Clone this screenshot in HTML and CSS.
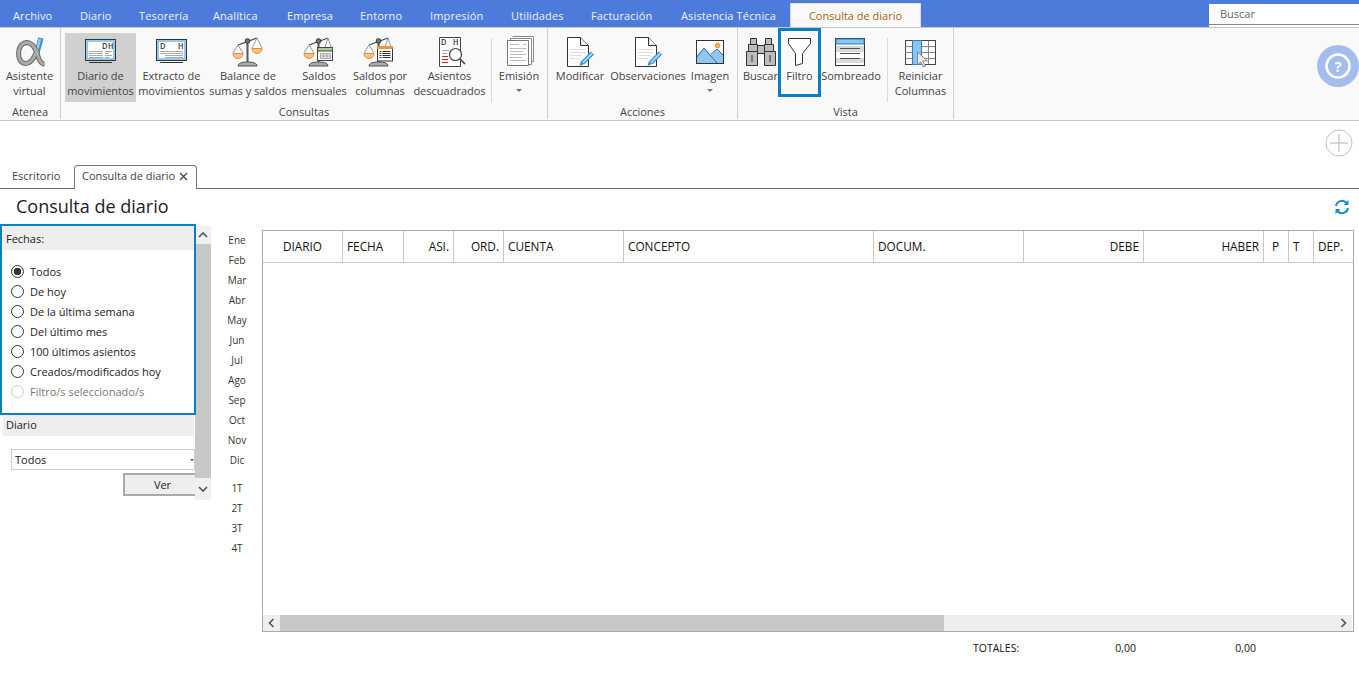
FILE: index.html
```html
<!DOCTYPE html>
<html lang="es">
<head>
<meta charset="utf-8">
<title>Consulta de diario</title>
<link rel="stylesheet" href="styles.css">
</head>
<body>
<div class="app">
  <header class="menubar">
    <span class="menu-item">Archivo</span><span class="menu-item">Diario</span><span class="menu-item">Tesorería</span><span class="menu-item">Analítica</span><span class="menu-item">Empresa</span><span class="menu-item">Entorno</span><span class="menu-item">Impresión</span><span class="menu-item">Utilidades</span><span class="menu-item">Facturación</span><span class="menu-item">Asistencia Técnica</span><span class="menu-tab">Consulta de diario</span>
    <div class="search"><span>Buscar</span></div>
  </header>

  <section class="ribbon">
    <div class="group g-atenea">
      <div class="buttons">
        <div class="rb w-asis">
          <svg class="ico" viewBox="0 0 40 36"><path d="M31 5 27 19" stroke="#3d97d6" stroke-width="5.500" fill="none"/><path d="M30 6 27 17" stroke="#9ccbef" stroke-width="2.500" fill="none"/><path d="M25.500 17C23 10 17 8 12.500 11 7.500 15 7.500 25 11.500 29c4 3 9 1 12-4 2-3 3-6 3-9 1 7 3 15 8 15" fill="none" stroke="#666" stroke-width="5"/><path d="M25.500 17C23 10 17 8 12.500 11 7.500 15 7.500 25 11.500 29c4 3 9 1 12-4 2-3 3-6 3-9 1 7 3 15 8 15" fill="none" stroke="#ababab" stroke-width="3"/></svg>
          <span class="lbl">Asistente<br>virtual</span>
        </div>
      </div>
      <div class="gname">Atenea</div>
    </div>

    <div class="group g-consultas">
      <div class="buttons">
        <div class="rb w-diario active">
          <svg class="ico" viewBox="0 0 40 36"><rect x="4.500" y="6.500" width="30" height="21" fill="#fff" stroke="#333"/><rect x="6" y="8" width="27" height="18" fill="#fff" stroke="#2f93d8"/><text x="21" y="15.500" class="ict">D</text><text x="27" y="15.500" class="ict">H</text><path d="M8 18.500h14M8 20.500h14M8 22.500h14M8 24.500h14M24 18.500h7M24 20.500h4M24 22.500h7M24 24.500h4" stroke="#aaa" fill="none"/><path d="M8 29.500h23" stroke="#333" fill="none"/></svg>
          <span class="lbl">Diario de<br>movimientos</span>
        </div>
        <div class="rb w-extracto">
          <svg class="ico" viewBox="0 0 40 36"><rect x="4.500" y="6.500" width="30" height="21" fill="#fff" stroke="#333"/><rect x="6" y="8" width="27" height="18" fill="#fff" stroke="#2f93d8"/><text x="8" y="15.500" class="ict">D</text><text x="26" y="15.500" class="ict">H</text><path d="M8 18.500h23M8 20.500h23M13 22.500h18M13 24.500h18" stroke="#aaa" fill="none"/><path d="M8 29.500h23" stroke="#333" fill="none"/></svg>
          <span class="lbl">Extracto de<br>movimientos</span>
        </div>
        <div class="rb w-balance">
          <svg class="ico" viewBox="0 0 40 36"><use href="#scale"/><path d="M29 5l-5 10M29 5l5 10" stroke="#999" fill="none"/><path d="M24 15.500h10a5 5 0 0 1-10 0z" fill="#f9c287" stroke="#e88d2c"/></svg>
          <span class="lbl">Balance de<br>sumas y saldos</span>
        </div>
        <div class="rb w-mens">
          <svg class="ico" viewBox="0 0 40 36"><use href="#scale"/><path d="M29 5l-3 9M29 5l3 9" stroke="#999" fill="none"/><rect x="18.500" y="14.500" width="15" height="13" fill="#fff" stroke="#444"/><rect x="18.500" y="14.500" width="15" height="3.500" fill="#a8d08d" stroke="#444"/><path d="M21.500 20.500h10v5h-10zM24.500 20.500v5M28 20.500v5M21.500 23h10" fill="#e6e6e6" stroke="#aaa"/></svg>
          <span class="lbl">Saldos<br>mensuales</span>
        </div>
        <div class="rb w-cols">
          <svg class="ico" viewBox="0 0 40 36"><g transform="translate(-1 0)"><use href="#scale"/><path d="M29 5l-3 9M29 5l3 9" stroke="#999" fill="none"/></g><rect x="17.500" y="13.500" width="15" height="14.500" fill="#fff" stroke="#333"/><rect x="17" y="13" width="16" height="3" fill="#f0953c"/><path d="M19.500 18.500h2M19.500 20.500h2M19.500 22.500h2M19.500 24.500h2M22.500 18.500h8M22.500 20.500h8M22.500 22.500h8M22.500 24.500h8" stroke="#333" fill="none"/></svg>
          <span class="lbl">Saldos por<br>columnas</span>
        </div>
        <div class="rb w-asien">
          <svg class="ico" viewBox="0 0 40 36"><path d="M9.500 4.500h21v29h-21z" fill="#fff" stroke="#444"/><text x="11" y="12" class="ict">D</text><text x="23" y="12" class="ict">H</text><path d="M12 17.500h7M12 20.500h5" stroke="#aaa" fill="none"/><path d="M12 23.500h6M12 26.500h6M12 29.500h6" stroke="#d3202f" fill="none"/><path d="M19.500 21.500a6 6 0 1 0 12 0a6 6 0 1 0-12 0z" fill="#fff" stroke="#444" stroke-width="1.200"/><path d="M30 26l5 5" stroke="#444" stroke-width="1.600"/></svg>
          <span class="lbl">Asientos<br>descuadrados</span>
        </div>
        <i class="sep"></i>
        <div class="rb w-emis">
          <svg class="ico" viewBox="0 0 40 36"><path d="M13.500 3.500h21v25h-2v2h-2" fill="#fff" stroke="#888"/><path d="M11.500 5.500h21v26h-21z" fill="#fff" stroke="#888"/><path d="M8.500 7.500h21v25h-21z" fill="#fff" stroke="#777"/><path d="M11 11.500h9M24 11.500h3M11 15.500h16M11 18.500h13M11 21.500h16M11 24.500h12M11 27.500h16" stroke="#bbb" fill="none"/></svg>
          <span class="lbl">Emisión</span><b class="caret"></b>
        </div>
      </div>
      <div class="gname">Consultas</div>
    </div>

    <div class="group g-acciones">
      <div class="buttons">
        <div class="rb w-modif">
          <svg class="ico" viewBox="0 0 40 36"><use href="#doc"/></svg>
          <span class="lbl">Modificar</span>
        </div>
        <div class="rb w-obs">
          <svg class="ico" viewBox="0 0 40 36"><use href="#doc"/></svg>
          <span class="lbl">Observaciones</span>
        </div>
        <div class="rb w-img">
          <svg class="ico" viewBox="0 0 40 36"><rect x="6.500" y="7.500" width="27" height="23" fill="#fff" stroke="#333"/><path d="M7 30V22l7-7 7 7 6-6 6 6v8z" fill="#8fc7ef"/><path d="M7 24l7-9 13 15M21 21l6-5 6 6" fill="none" stroke="#2a6ea8"/><circle cx="27.500" cy="12.500" r="2.300" fill="#f6b26b" stroke="#e08a2a"/></svg>
          <span class="lbl">Imagen</span><b class="caret"></b>
        </div>
      </div>
      <div class="gname">Acciones</div>
    </div>

    <div class="group g-vista">
      <div class="buttons">
        <div class="rb w-busc">
          <svg class="ico" viewBox="0 0 40 36"><path d="M9.500 5.500h6v6h-6zM24.500 5.500h6v6h-6zM7.500 11.500h9v7h-9zM23.500 11.500h9v7h-9zM5.500 18.500h11v14h-11zM23.500 18.500h11v14h-11zM16.500 12.500h7v8h-7z" fill="#bdbdbd" stroke="#333"/><path d="M11 22v7M29 22v7" stroke="#333" fill="none"/></svg>
          <span class="lbl">Buscar</span>
        </div>
        <div class="rb w-filt focus">
          <svg class="ico" viewBox="0 0 40 36"><path d="M8.500 5.500h22v5l-8 10v10l-7 2V20.500l-7-10z" fill="#fff" stroke="#333"/></svg>
          <span class="lbl">Filtro</span>
        </div>
        <div class="rb w-somb">
          <svg class="ico" viewBox="0 0 40 36"><rect x="4.500" y="5.500" width="29" height="27" fill="#fff" stroke="#333"/><rect x="5" y="6" width="28" height="5" fill="#8cc4ee" stroke="#2a7fc4"/><rect x="5" y="13" width="28" height="6" fill="#d9d9d9"/><rect x="5" y="25" width="28" height="5" fill="#d9d9d9"/><path d="M9 15.500h20M9 20.500h20M9 25.500h20" stroke="#555" fill="none"/></svg>
          <span class="lbl">Sombreado</span>
        </div>
        <i class="sep sep-v"></i>
        <div class="rb w-rein">
          <svg class="ico" viewBox="0 0 40 36"><rect x="4.500" y="7.500" width="30" height="24" fill="#fff" stroke="#444"/><path d="M4 13.500h30M4 19.500h30M4 25.500h30M11.500 8v23M20.500 8v23M27.500 8v23" stroke="#888" fill="none"/><rect x="11.500" y="7.500" width="9" height="24" fill="#8cc4ee" stroke="#2a7fc4"/><path d="M16.500 19l0 13 3-3 3 5 2-1-3-5h5z" fill="#e8e8e8" stroke="#888"/></svg>
          <span class="lbl">Reiniciar<br>Columnas</span>
        </div>
      </div>
      <div class="gname">Vista</div>
    </div>

    <div class="help">
      <svg viewBox="0 0 44 44" width="44" height="44"><circle cx="22" cy="22" r="21" fill="#a5bdec"/><circle cx="22" cy="22" r="11.500" fill="none" stroke="#fff" stroke-width="2.500"/><text x="22" y="27.500" class="qm">?</text></svg>
    </div>
  </section>

  <section class="tabzone">
    <div class="plus-row">
      <svg viewBox="0 0 28 28" width="28" height="28"><circle cx="14" cy="14" r="13" fill="#fff" stroke="#c4c4c4"/><path d="M14 5v18M5 14h18" stroke="#b4b4b4" fill="none"/></svg>
    </div>
    <nav class="tabs">
      <span class="tab">Escritorio</span>
      <span class="tab current">Consulta de diario<svg viewBox="0 0 9 9" width="9" height="9"><path d="M1 1l7 7M8 1L1 8" stroke="#444" stroke-width="1.300" fill="none"/></svg></span>
    </nav>
  </section>

  <div class="titlebar">
    <h1>Consulta de diario</h1>
    <svg viewBox="0 0 16 16" width="16" height="16"><path d="M2 7a6 6 0 0 1 10.500-3M14 9a6 6 0 0 1-10.500 3" fill="none" stroke="#1c86cf" stroke-width="2"/><path d="M14.500 1v5h-5zM1.500 15v-5h5z" fill="#1c86cf"/></svg>
  </div>

  <main class="content">
    <aside class="filters">
      <div class="filter-scroll">
        <div class="fechas">
          <div class="fhead">Fechas:</div>
          <div class="radios">
            <label class="radio on"><i></i>Todos</label>
            <label class="radio"><i></i>De hoy</label>
            <label class="radio"><i></i>De la última semana</label>
            <label class="radio"><i></i>Del último mes</label>
            <label class="radio"><i></i>100 últimos asientos</label>
            <label class="radio"><i></i>Creados/modificados hoy</label>
            <label class="radio off"><i></i>Filtro/s seleccionado/s</label>
          </div>
        </div>
        <div class="fhead dhead">Diario</div>
        <div class="select"><span>Todos</span><b></b></div>
        <div class="ver-row"><span class="ver">Ver</span></div>
      </div>
      <div class="vscroll">
        <svg viewBox="0 0 16 16" width="16" height="18"><path d="M4 10l4-4 4 4" fill="none" stroke="#555" stroke-width="1.600"/></svg>
        <div class="vthumb"></div>
        <svg viewBox="0 0 16 16" width="16" height="22"><path d="M4 6l4 4 4-4" fill="none" stroke="#555" stroke-width="1.600"/></svg>
      </div>
    </aside>

    <div class="months">
      <span>Ene</span><span>Feb</span><span>Mar</span><span>Abr</span><span>May</span><span>Jun</span><span>Jul</span><span>Ago</span><span>Sep</span><span>Oct</span><span>Nov</span><span>Dic</span>
      <span class="q">1T</span><span>2T</span><span>3T</span><span>4T</span>
    </div>

    <div class="tablezone">
      <div class="grid">
        <div class="ghead">
          <span class="ctr">DIARIO</span><span>FECHA</span><span class="rgt">ASI.</span><span class="rgt">ORD.</span><span>CUENTA</span><span>CONCEPTO</span><span>DOCUM.</span><span class="rgt">DEBE</span><span class="rgt">HABER</span><span class="ind">P</span><span>T</span><span>DEP.</span>
        </div>
        <div class="gbody"></div>
        <div class="hscroll">
          <svg viewBox="0 0 16 16" width="17" height="16"><path d="M10 4 6 8l4 4" fill="none" stroke="#555" stroke-width="1.600"/></svg>
          <div class="hthumb"></div>
          <svg viewBox="0 0 16 16" width="17" height="16"><path d="M6 4l4 4-4 4" fill="none" stroke="#555" stroke-width="1.600"/></svg>
        </div>
      </div>
      <div class="totals">
        <span class="t-lbl">TOTALES:</span><span class="t-debe">0,00</span><span class="t-haber">0,00</span>
      </div>
    </div>
  </main>
</div>

<svg class="defs" width="0" height="0">
  <defs>
    <g id="scale">
      <path d="M19.500 8v22" stroke="#555" stroke-width="2"/>
      <path d="M10 12 29 5" stroke="#444" stroke-width="1.200"/>
      <path d="M10 12 5 20M10 12l5 8" stroke="#999" fill="none"/>
      <circle cx="19.500" cy="8" r="2.300" fill="#777" stroke="#333"/>
      <path d="M5 20.500h10a5 5 0 0 1-10 0z" fill="#f9c287" stroke="#e88d2c"/>
      <path d="M10 33c0-3 4-4 9.500-4s9.500 1 9.500 4z" fill="#aaa" stroke="#555"/>
    </g>
    <g id="doc">
      <path d="M7.500 4.500h13l8 8v21h-21z" fill="#fff" stroke="#333"/>
      <path d="M20.500 4.500v8h8" fill="#eee" stroke="#333"/>
      <path d="M10 16.500h15M10 19.500h15M10 22.500h12M10 25.500h9" stroke="#ddd" fill="none"/>
      <path d="M22.500 30l10-10" stroke="#2f8fd6" stroke-width="4.500"/>
      <path d="M22.500 30l10-10" stroke="#a9d4f3" stroke-width="1.800"/>
      <path d="M19.500 33l1.500-5 3 3z" fill="#2f8fd6"/>
    </g>
  </defs>
</svg>
</body>
</html>
```

FILE: styles.css
```css
* { box-sizing: border-box; }
html, body { margin: 0; padding: 0; background: #fff; }
body { font-family: "Open Sans", "Noto Sans", sans-serif; font-size: 11px; color: #333; }
.app { width: 1359px; height: 673px; overflow: hidden; display: flex; flex-direction: column; }
.defs { display: block; height: 0; }

/* menu bar */
.menubar { height: 27px; flex: none; background: #4d7bdc; color: #fff; display: grid; grid-template-columns: 67px 59px 74px 74px 73px 70px 81px 80px 90px 122px 131px 288px 150px; grid-template-rows: 27px; align-items: start; }
.menu-item { padding: 4px 0 0 13px; color: #eef2fb; white-space: nowrap; line-height: 24px; letter-spacing: .14px; }
.menu-tab { height: 24px; margin-top: 3px; background: #f9f9f9; color: #a9650a; text-align: center; line-height: 24px; border-top: 1px solid #f1dfb6; border-left: 1px solid #ddd; border-right: 1px solid #ddd; }
.search { grid-column: 13; height: 21px; margin-top: 4px; background: #fff; border-bottom: 1px solid #888; padding-left: 11px; line-height: 19px; color: #666; box-shadow: 0 2px 0 #fff; }

/* ribbon */
.ribbon { height: 94px; flex: none; background: #f9f9f9; border-top: 1px solid #c8c8c8; border-bottom: 1px solid #c8c8c8; display: flex; }
.group { display: flex; flex-direction: column; flex: none; border-right: 1px solid #cfcfcf; height: 91px; }
.g-atenea { width: 61px; }
.g-consultas { width: 487px; }
.g-acciones { width: 190px; }
.g-vista { width: 216px; }
.buttons { display: flex; height: 78px; padding-top: 5px; }
.g-consultas .buttons { padding-left: 4px; }
.g-acciones .buttons { padding-left: 6px; }
.g-vista .buttons { padding-left: 5px; }
.gname { text-align: center; line-height: 15px; color: #444; }
.rb { flex: none; height: 69px; display: flex; flex-direction: column; align-items: center; color: #444; line-height: 15px; }
.ico { width: 40px; height: 36px; margin-bottom: -1px; flex: none; display: block; overflow: visible; }
.lbl { text-align: center; white-space: nowrap; }
.ict { font-family: "Liberation Mono", monospace; font-size: 9px; fill: #222; }
.qm { font-family: "Open Sans", sans-serif; font-size: 15px; font-weight: 700; fill: #fff; text-anchor: middle; }
.active { background: #d0d0d0; }
.caret { width: 0; height: 0; margin-top: 6px; border: 3px solid transparent; border-top: 3px solid #777; border-bottom: 0; }
.sep { flex: none; width: 1px; height: 64px; margin: 5px 3px 0 5px; background: #dcdcdc; }
.sep-v { margin: 5px 5px 0 6px; }
.w-asis { width: 59px; }
.w-diario { width: 71px; }
.w-extracto { width: 71px; }
.w-balance { width: 80px; margin-left: 1px; }
.w-mens { width: 56px; margin-left: 3px; }
.w-cols { width: 58px; margin-left: 4px; }
.w-asien { width: 73px; margin-left: 4px; }
.w-emis { width: 48px; }
.w-modif { width: 52px; }
.w-obs { width: 76px; margin-left: 4px; }
.w-img { width: 40px; margin-left: 4px; }
.w-busc { width: 35px; }
.w-filt { width: 43px; margin-top: -5px; height: 69px; border: 3px solid #0a80c4; padding-top: 2px; }
.w-somb { width: 60px; }
.w-rein { width: 55px; }
.help { flex: 1; display: flex; justify-content: flex-end; padding: 16px 0 0; margin-right: -1px; }

/* tab zone */
.tabzone { height: 68px; flex: none; display: flex; flex-direction: column; border-bottom: 1px solid #666; }
.plus-row { height: 44px; display: flex; justify-content: flex-end; padding: 8px 6px 0 0; }
.tabs { height: 23px; display: flex; align-items: stretch; padding-left: 12px; }
.tab { line-height: 22px; color: #444; }
.tab:first-child { width: 62px; }
.tab.current { width: 123px; background: #fff; border: 1px solid #777; border-bottom: 0; border-radius: 4px 4px 0 0; padding: 0 0 3px 7px; height: 24px; display: flex; align-items: center; gap: 4px; }

/* title */
.titlebar { height: 35px; flex: none; display: flex; justify-content: space-between; align-items: center; padding: 0 9px 2px 16px; }
.titlebar svg { margin-top: 2px; }
h1 { margin: 0; font-weight: 400; font-size: 18px; color: #222; }

/* content */
.content { flex: 1; display: flex; align-items: flex-start; }
.filters { width: 211px; flex: none; display: flex; }
.filter-scroll { width: 195px; flex: none; }
.fechas { width: 196px; height: 191px; border: 2px solid #0a80c4; padding: 0 0 0 1px; position: relative; }
.fhead { height: 24px; width: 191px; background: #eee; line-height: 26px; padding-left: 3px; color: #222; }
.radios { padding-top: 11px; }
.radio { display: flex; align-items: center; height: 20px; padding-left: 8px; gap: 6px; color: #222; }
.radio i { width: 13px; height: 13px; border-radius: 50%; border: 1px solid #333; background: #fff; flex: none; }
.radio.on i { background: radial-gradient(circle, #333 0 3.5px, #fff 4px); }
.radio.off { color: #777; }
.radio.off i { border-color: #ccc; }
.dhead { margin: 0 0 0 3px; height: 21px; line-height: 20px; }
.select { margin: 13px 0 0 11px; width: 184px; height: 21px; border: 1px solid #ccc; display: flex; align-items: center; justify-content: space-between; padding: 0 0 0 3px; overflow: hidden; color: #222; }
.select b { width: 0; height: 0; border: 2px solid transparent; border-top: 2px solid #444; border-bottom: 0; }
.ver-row { display: flex; justify-content: flex-end; margin-top: 3px; }
.ver { width: 72px; height: 23px; background: #eee; border: 2px solid #aaa; border-right: 0; padding-left: 5px; text-align: center; line-height: 19px; color: #222; }
.vscroll { width: 16px; flex: none; height: 274px; margin-top: 2px; background: #f0f0f0; display: flex; flex-direction: column; }
.vscroll svg { flex: none; }
.vthumb { flex: 1; background: #c8c8c8; }

.months { width: 51px; flex: none; display: flex; flex-direction: column; align-items: center; padding: 6px 0 0 1px; }
.months span { height: 20px; line-height: 20px; font-size: 10px; color: #333; }
.months .q { margin-top: 8px; }

.tablezone { width: 1092px; flex: none; margin-top: 6px; }
.grid { height: 402px; border: 1px solid #aaa; display: flex; flex-direction: column; }
.ghead { height: 32px; flex: none; display: grid; grid-template-columns: 80px 61px 50px 50px 120px 250px 150px 120px 120px 25px 25px 40px; border-bottom: 1px solid #c8c8c8; }
.ghead span { border-right: 1px solid #c8c8c8; line-height: 31px; padding: 0 4px; color: #111; font-size: 11.800px; white-space: nowrap; }
.ghead span:last-child { border-right: 0; }
.ghead .rgt { text-align: right; }
.ghead .ctr { text-align: center; padding-left: 0; padding-right: 0; }
.ghead .ind { padding-left: 8px; }
.gbody { flex: 1; }
.hscroll { height: 16px; flex: none; background: #eee; display: flex; justify-content: space-between; margin-right: 1px; }
.hscroll svg { flex: none; }
.hthumb { width: 664px; background: #c8c8c8; flex: none; margin-right: auto; }
.totals { display: flex; padding: 8px 0 0 711px; font-size: 10.500px; color: #111; line-height: 16px; }
.t-lbl { width: 90px; white-space: nowrap; }
.t-debe { width: 73px; text-align: right; }
.t-haber { width: 120px; text-align: right; }
```
